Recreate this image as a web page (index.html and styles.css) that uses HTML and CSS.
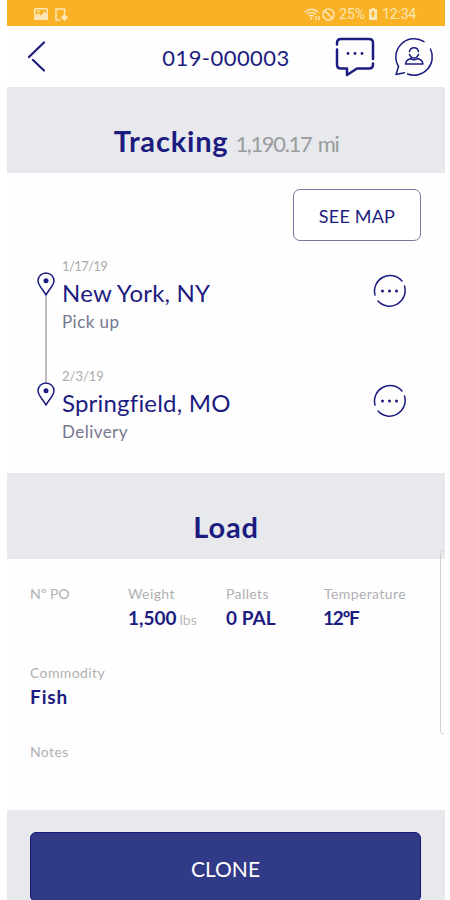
FILE: index.html
```html
<!DOCTYPE html>
<html lang="en">
<head>
    <meta charset="utf-8">
    <title>019-000003</title>
    <link rel="stylesheet" href="styles.css">
</head>
<body>
    <div class="phone">
        <div class="status-bar">
            <div class="status-left">
                <svg width="14" height="12" viewBox="0 0 14 12"><path fill="currentColor" fill-rule="evenodd" d="M1.500 0h11a1.500 1.500 0 0 1 1.500 1.500v9a1.500 1.500 0 0 1-1.500 1.500h-11A1.500 1.500 0 0 1 0 10.500v-9A1.500 1.500 0 0 1 1.500 0zM1.500 1.500v6l3-2.500 2.500 2.500 3.500-4 2 2v-4zM3 2.500h2.500v1.500H3z"/></svg>
                <svg width="13" height="13" viewBox="0 0 13 13" fill="none" stroke="currentColor" stroke-width="1.500"><path d="M5.500 12H1V1h8.500v5"/><path fill="currentColor" d="M9.500 7l2.500 2.500-2.500 2.500L7 9.500z"/></svg>
            </div>
            <div class="status-right">
                <svg width="17" height="13" viewBox="0 0 17 13" fill="none" stroke="currentColor" stroke-width="1.400"><path d="M.7 4.200C4.500.3 10.500.3 14 4.200M2.800 6.300c2.700-2.600 6.500-2.600 9 0M5 8.300c1.500-1.300 3.200-1.300 4.700 0"/><path d="M7.400 9v2.500M12 8v4M15 8v4"/></svg>
                <svg width="13" height="13" viewBox="0 0 13 13" fill="none" stroke="currentColor" stroke-width="1.500"><circle cx="6.500" cy="6.500" r="5.500"/><path d="M2.600 2.600l7.800 7.800"/></svg>
                <span class="battery-level">25%</span>
                <svg width="8" height="12" viewBox="0 0 8 12"><path fill="currentColor" fill-rule="evenodd" d="M2.500 0h3v1.200H8V12H0V1.200h2.500zM3 3v2.500H2v1h1V9h2V6.500h1v-1H5V3z"/></svg>
                <span class="clock">12:34</span>
            </div>
        </div>

        <div class="header">
            <svg class="back" width="18" height="32" viewBox="0 0 18 32"><path d="M17 1.500L2 16M6 19L17 29.500"/></svg>
            <h1>019-000003</h1>
            <div class="header-icons">
                <svg width="40" height="40" viewBox="0 0 40 40">
                    <path class="thick" d="M2 7.500V6q0-4 4-4h28q4 0 4 4v16M38 26.500v1q0 4-4 4H22l-10 6.500v-6.500H6q-4 0-4-4V12.500"/>
                    <g class="dots"><circle cx="13" cy="16.500" r="1.400"/><circle cx="20" cy="16.500" r="1.400"/><circle cx="27" cy="16.500" r="1.400"/></g>
                </svg>
                <svg width="40" height="40" viewBox="0 0 40 40">
                    <path d="M30 4.600A18.300 18.300 0 0 0 4.500 29.500L2 37.500l8.400-1.800M13.500 37A18.300 18.300 0 0 0 36.500 12"/>
                    <path d="M15.500 14.500a4.600 4.600 0 0 1 9 0M15.500 17.500q1.500 3.500 4.500 3.500t4.500-3.500M17 21.500l-3 1.300q-2 .9-2.500 4.200h17.500q-.5-3.300-2.500-4.200l-3-1.300M16.500 21.500q3.500 2.700 7 0"/>
                </svg>
            </div>
        </div>

        <div class="band">
            <h2>Tracking</h2>
            <span class="distance">1,190.17 mi</span>
        </div>

        <div class="tracking">
            <button class="map-button">SEE MAP</button>

            <div class="stop">
                <div class="stop-marker">
                    <svg width="18" height="24" viewBox="0 0 18 24"><path d="M9 23C5.500 17 1 13 1 9a8 8 0 0 1 16 0c0 4-4.500 8-8 14z"/><circle class="dots" cx="9" cy="8.800" r="2.500"/></svg>
                    <div class="stop-line"></div>
                </div>
                <div class="stop-content">
                    <div class="stop-date">1/17/19</div>
                    <div class="stop-city">New York, NY</div>
                    <div class="stop-type">Pick up</div>
                </div>
                <svg class="more" width="34" height="34" viewBox="0 0 34 34">
                    <path d="M29 7A15.600 15.600 0 0 0 2 21M5 27A15.600 15.600 0 0 0 31.500 12"/>
                    <g class="dots"><circle cx="9.500" cy="17" r="1.500"/><circle cx="16.500" cy="17" r="1.500"/><circle cx="23.500" cy="17" r="1.500"/></g>
                </svg>
            </div>

            <div class="stop">
                <div class="stop-marker">
                    <svg width="18" height="24" viewBox="0 0 18 24"><path d="M9 23C5.500 17 1 13 1 9a8 8 0 0 1 16 0c0 4-4.500 8-8 14z"/><circle class="dots" cx="9" cy="8.800" r="2.500"/></svg>
                </div>
                <div class="stop-content">
                    <div class="stop-date last">2/3/19</div>
                    <div class="stop-city">Springfield, MO</div>
                    <div class="stop-type">Delivery</div>
                </div>
                <svg class="more" width="34" height="34" viewBox="0 0 34 34">
                    <path d="M29 7A15.600 15.600 0 0 0 2 21M5 27A15.600 15.600 0 0 0 31.500 12"/>
                    <g class="dots"><circle cx="9.500" cy="17" r="1.500"/><circle cx="16.500" cy="17" r="1.500"/><circle cx="23.500" cy="17" r="1.500"/></g>
                </svg>
            </div>
        </div>

        <div class="band">
            <h2>Load</h2>
        </div>

        <div class="load">
            <div class="field">
                <div class="label">Nº PO</div>
            </div>
            <div class="field">
                <div class="label">Weight</div>
                <div class="value">1,500<span class="unit">lbs</span></div>
            </div>
            <div class="field">
                <div class="label">Pallets</div>
                <div class="value">0 PAL</div>
            </div>
            <div class="field">
                <div class="label">Temperature</div>
                <div class="value temperature">12ºF</div>
            </div>
            <div class="field wide">
                <div class="label">Commodity</div>
                <div class="value commodity">Fish</div>
            </div>
            <div class="field wide">
                <div class="label">Notes</div>
            </div>
        </div>

        <div class="footer">
            <button class="clone-button">CLONE</button>
        </div>

        <!-- edge panel handle -->
        <div class="edge-handle"></div>
    </div>
</body>
</html>
```
FILE: styles.css
```css
* {
    margin: 0;
    padding: 0;
    box-sizing: border-box;
}

body {
    font-family: Lato, 'Open Sans', sans-serif;
    font-variant-ligatures: none;
    background: #fff;
    color: #1c1c80;
    height: 900px;
    overflow: hidden;
}

svg {
    display: block;
    flex-shrink: 0;
}

.phone {
    position: relative;
    width: 438px;
    height: 900px;
    margin-left: 7px;
    overflow: hidden;
    background: #fefefe;
}

.status-bar {
    display: flex;
    justify-content: space-between;
    align-items: center;
    height: 26px;
    padding: 2px 29px 0 27px;
    background: #f9b226;
    color: #fde6b5;
}

.status-left {
    display: flex;
    align-items: center;
    gap: 7px;
}

.status-right {
    display: flex;
    align-items: center;
    gap: 5px;
    font-family: Roboto, sans-serif;
    font-size: 14px;
    line-height: 24px;
}

.status-right svg:first-child {
    margin-right: -4px;
}

.battery-level {
    margin-left: -1px;
    margin-right: -1px;
}

.clock {
    letter-spacing: -0.2px;
}

.header {
    display: grid;
    grid-template-columns: 95px 1fr 104px;
    align-items: center;
    height: 61px;
    padding: 0 11px 0 20px;
}

.header svg,
.stop-marker svg,
.more {
    fill: none;
    stroke: #1c1c80;
    stroke-width: 1.5;
    stroke-linecap: round;
    stroke-linejoin: round;
}

.header svg.back {
    stroke-width: 2.2;
}

.header .thick {
    stroke-width: 2.5;
}

.stop-marker .dots,
.dots {
    fill: #1c1c80;
    stroke: none;
}

.header h1 {
    padding-top: 3px;
    font-size: 22px;
    font-weight: 400;
    line-height: 28px;
    letter-spacing: 0.45px;
    text-align: center;
    white-space: nowrap;
}

.header-icons {
    display: flex;
    justify-content: flex-end;
    gap: 19px;
}

.band {
    display: flex;
    justify-content: center;
    align-items: baseline;
    gap: 7px;
    height: 85.5px;
    padding-top: 35px;
    background: #e7e9ec;
}

.band h2 {
    font-size: 29px;
    font-weight: 700;
    line-height: 38px;
    letter-spacing: 0.8px;
}

.distance {
    font-size: 22px;
    letter-spacing: -1.35px;
    word-spacing: 2px;
    color: #9a9b9d;
}

.tracking {
    display: flex;
    flex-direction: column;
    height: 300.5px;
    padding: 16.5px 24px 0 30px;
}

.map-button {
    align-self: flex-end;
    flex-shrink: 0;
    width: 128px;
    height: 52px;
    margin-bottom: 16px;
    padding-top: 2px;
    background: #fff;
    border: 1px solid #77779f;
    border-radius: 7px;
    color: #1c1c80;
    font-family: inherit;
    font-size: 18px;
    letter-spacing: 0.2px;
}

.stop {
    display: flex;
    flex-shrink: 0;
    height: 109.5px;
    padding-right: 14px;
}

.stop-marker {
    display: flex;
    flex-direction: column;
    align-items: center;
    width: 18px;
    margin: 15px 7px 0 0;
}

.stop-line {
    flex: 1;
    width: 2px;
    margin-bottom: -15px;
    background: #bdbdc1;
}

.stop-content {
    flex: 1;
}

.stop-date {
    font-size: 13px;
    line-height: 18px;
    letter-spacing: -0.6px;
    color: #ababad;
}

.stop-date.last {
    letter-spacing: 0;
}

.stop-city {
    font-size: 24px;
    line-height: 36px;
    letter-spacing: 0.2px;
}

.stop-type {
    font-size: 17px;
    line-height: 22px;
    letter-spacing: 0.45px;
    color: #77778f;
}

.more {
    margin-top: 17px;
}

.load {
    display: grid;
    grid-template-columns: repeat(4, 98px);
    grid-auto-rows: 79px;
    height: 251.5px;
    padding: 25.5px 0 0 23px;
}

.wide {
    grid-column: 1 / -1;
}

.label {
    font-size: 14px;
    line-height: 20px;
    letter-spacing: 0.4px;
    color: #b0b0b2;
}

.field:first-child .label {
    letter-spacing: 0;
}

.value {
    font-size: 19px;
    font-weight: 700;
    line-height: 28px;
}

.temperature {
    margin-left: -1px;
    letter-spacing: -1.2px;
}

.commodity {
    letter-spacing: 0.9px;
}

.unit {
    margin-left: 3px;
    font-size: 14px;
    font-weight: 400;
    color: #b9b9bb;
}

.footer {
    height: 90px;
    padding: 22px 24px 0 23px;
    background: #e7e9ec;
}

.clone-button {
    width: 100%;
    height: 70px;
    padding-top: 2px;
    background: #303a87;
    border: 1px solid #17177c;
    border-radius: 6px;
    color: #fff;
    font-family: inherit;
    font-size: 21px;
}

.edge-handle {
    position: absolute;
    top: 550px;
    right: -1px;
    width: 6px;
    height: 185px;
    border: 1px solid #cfcfd2;
    border-right: none;
    border-radius: 5px 0 0 5px;
    clip-path: inset(0 2px 0 0);
}
```
